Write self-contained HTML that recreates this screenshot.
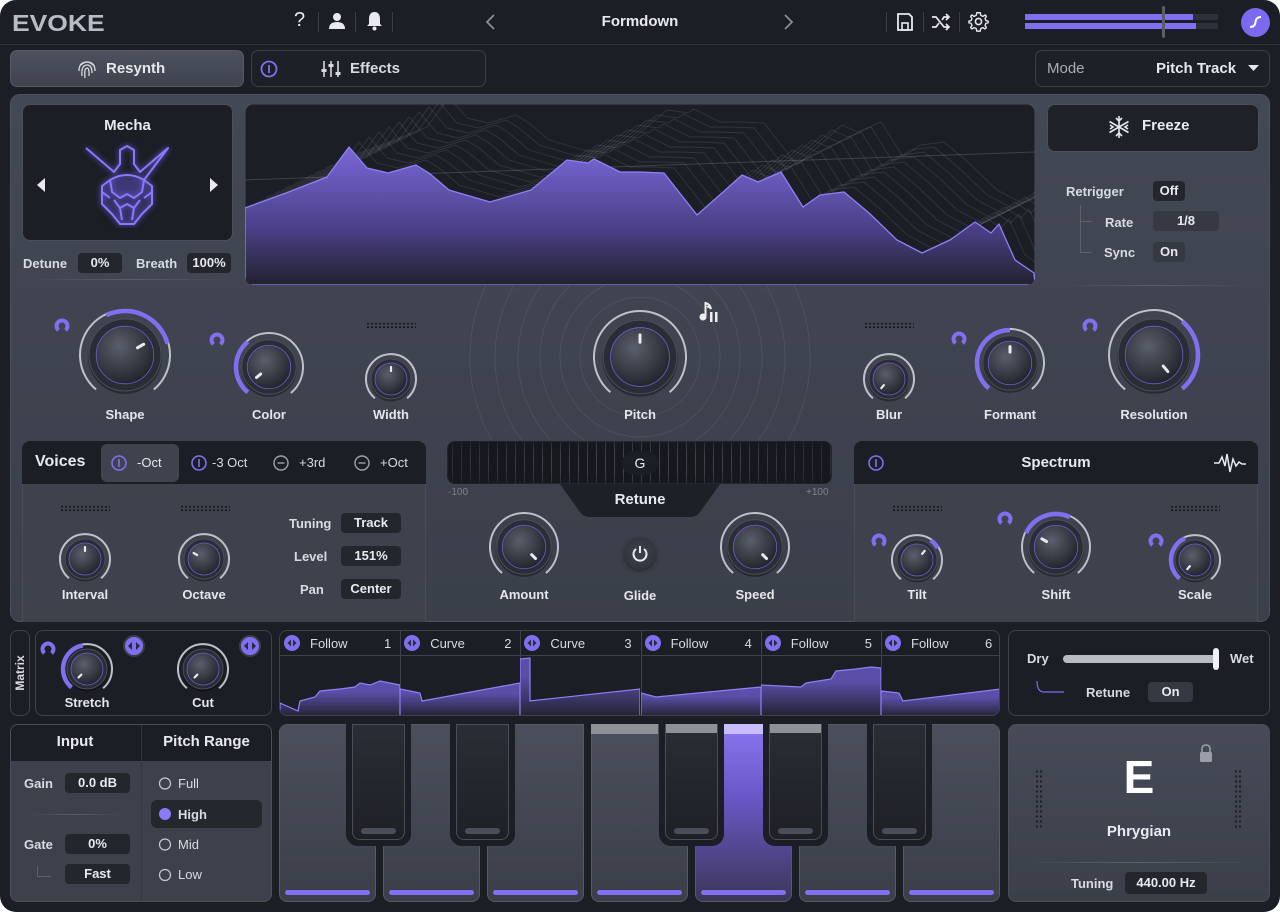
<!DOCTYPE html>
<html><head><meta charset="utf-8">
<style>
*{box-sizing:border-box;margin:0;padding:0}
body{width:1280px;height:912px;background:#fff;font-family:"Liberation Sans",sans-serif;color:#e8eaf0;overflow:hidden;position:relative}
.app{position:absolute;left:0;top:0;width:1280px;height:912px;background:#1c1e25;border-radius:16px;overflow:hidden}
.a{position:absolute}
.lbl{position:absolute;font-size:13px;font-weight:bold;color:#e4e6ec;text-align:center;transform:translateX(-50%);white-space:nowrap}
.val{position:absolute;background:#23262d;border-radius:4px;font-size:13px;font-weight:bold;color:#e8eaf0;text-align:center;line-height:20px;height:20px}
.t{position:absolute;font-size:13px;color:#d8dbe2;font-weight:bold;white-space:nowrap}
.dots{position:absolute;height:7px;background-image:radial-gradient(circle,#16181d 0.9px,transparent 1.1px);background-size:4px 3.5px}
</style></head><body>
<div class="app" id="app">
<!-- top bar -->
<div class="a" style="left:12px;top:10px;font-size:23px;font-weight:bold;color:#b9bcc5;transform:scaleX(1.15);transform-origin:left">EVOKE</div>
<div class="a" style="left:294px;top:9px;font-size:20px;color:#e8eaf0">?</div>
<div class="a" style="left:318px;top:12px;width:1px;height:20px;background:#3a3d46"></div>
<svg class="a" style="left:328px;top:12px" width="18" height="18" viewBox="0 0 18 18"><circle cx="9" cy="5" r="4" fill="#e8eaf0"/><path d="M1 17 Q1 10 9 10 Q17 10 17 17Z" fill="#e8eaf0"/></svg>
<div class="a" style="left:355px;top:12px;width:1px;height:20px;background:#3a3d46"></div>
<svg class="a" style="left:366px;top:11px" width="17" height="20" viewBox="0 0 17 20"><path d="M8.5 1 C4 1 3 5 3 8 L3 13 L1 15 L16 15 L14 13 L14 8 C14 5 13 1 8.5 1Z" fill="#e8eaf0"/><circle cx="8.5" cy="17.5" r="2" fill="#e8eaf0"/></svg>
<div class="a" style="left:392px;top:12px;width:1px;height:20px;background:#3a3d46"></div>
<svg class="a" style="left:484px;top:14px" width="12" height="16"><path d="M10 1 L3 8 L10 15" stroke="#8a8e98" stroke-width="1.8" fill="none"/></svg>
<div class="a" style="left:540px;top:13px;width:200px;text-align:center;font-size:15px;font-weight:bold">Formdown</div>
<svg class="a" style="left:783px;top:14px" width="12" height="16"><path d="M2 1 L9 8 L2 15" stroke="#8a8e98" stroke-width="1.8" fill="none"/></svg>
<div class="a" style="left:886px;top:12px;width:1px;height:20px;background:#3a3d46"></div>
<svg class="a" style="left:896px;top:12px" width="18" height="20" viewBox="0 0 18 20"><path d="M2 2 H13 L16 5 V18 H2Z" stroke="#e8eaf0" stroke-width="1.8" fill="none"/><rect x="6" y="11" width="6" height="7" stroke="#e8eaf0" stroke-width="1.6" fill="none"/></svg>
<div class="a" style="left:923px;top:12px;width:1px;height:20px;background:#3a3d46"></div>
<svg class="a" style="left:931px;top:12px" width="20" height="20" viewBox="0 0 20 20"><path d="M1 5 H5 L13 15 H18 M1 15 H5 L8 11 M11 8 L13 5 H18 M15 2 L18 5 L15 8 M15 12 L18 15 L15 18" stroke="#e8eaf0" stroke-width="1.7" fill="none"/></svg>
<div class="a" style="left:959px;top:12px;width:1px;height:20px;background:#3a3d46"></div>
<svg class="a" style="left:968px;top:11px" width="21" height="21" viewBox="0 0 24 24"><circle cx="12" cy="12" r="3.5" stroke="#e8eaf0" stroke-width="1.8" fill="none"/><path d="M12 2 L14 2 L14.6 5 L17 6.2 L19.6 4.5 L21 6 L19.5 8.6 L20.5 11 L23 11.5 V13.5 L20.5 14 L19.5 16.4 L21 19 L19.5 20.5 L17 19 L14.6 20 L14 23 H10 L9.4 20 L7 19 L4.5 20.5 L3 19 L4.5 16.4 L3.5 14 L1 13.5 V11.5 L3.5 11 L4.5 8.6 L3 6 L4.5 4.5 L7 6.2 L9.4 5 L10 2Z" stroke="#e8eaf0" stroke-width="1.6" fill="none" stroke-linejoin="round"/></svg>
<div class="a" style="left:1025px;top:14px;width:193px;height:6px;background:#2e313a"></div>
<div class="a" style="left:1025px;top:14px;width:168px;height:6px;background:#8070f0"></div>
<div class="a" style="left:1025px;top:23px;width:193px;height:6px;background:#2e313a"></div>
<div class="a" style="left:1025px;top:23px;width:171px;height:6px;background:#8070f0"></div>
<div class="a" style="left:1162px;top:6px;width:3px;height:32px;background:#5a5e68;border-radius:2px"></div>
<div class="a" style="left:1241px;top:8px;width:29px;height:29px;border-radius:50%;background:#7b69f0"></div>
<svg class="a" style="left:1247px;top:14px" width="17" height="17"><path d="M3 13 Q8 13 8.5 8 Q9 3 14 3" stroke="#fff" stroke-width="2" fill="none"/></svg>
<div class="a" style="left:0;top:44px;width:1280px;height:1px;background:#2e3139"></div>

<!-- tabs -->
<div class="a" style="left:10px;top:50px;width:234px;height:37px;border-radius:7px;background:linear-gradient(#4c515d,#3f4350);border:1px solid #555a66"></div>
<svg class="a" style="left:77px;top:58px" width="20" height="22" viewBox="0 0 20 22"><g stroke="#d8dae0" stroke-width="1.3" fill="none"><path d="M3 8 Q10 0 17 8"/><path d="M2 13 Q2 4 10 4 Q18 4 18 13"/><path d="M5 18 Q4 7 10 7 Q15 7 15 15"/><path d="M8 20 Q7 10 10 10 Q12.5 10 12 18"/></g></svg>
<div class="a" style="left:106px;top:60px;font-size:15px;font-weight:bold;color:#e6e8ee">Resynth</div>
<div class="a" style="left:251px;top:50px;width:235px;height:37px;border-radius:7px;background:#1e2027;border:1px solid #3a3e48"></div>
<svg class="a" style="left:260px;top:60px" width="18" height="18"><circle cx="9" cy="9" r="7.5" stroke="#8070f0" stroke-width="1.8" fill="none"/><line x1="9" y1="5" x2="9" y2="13" stroke="#8070f0" stroke-width="1.8"/></svg>
<svg class="a" style="left:320px;top:59px" width="22" height="20"><g stroke="#d8dae0" stroke-width="1.6"><line x1="4" y1="2" x2="4" y2="18"/><line x1="11" y1="2" x2="11" y2="18"/><line x1="18" y1="2" x2="18" y2="18"/></g><g fill="#d8dae0"><rect x="1.5" y="10" width="5" height="3"/><rect x="8.5" y="5" width="5" height="3"/><rect x="15.5" y="13" width="5" height="3"/></g></svg>
<div class="a" style="left:350px;top:60px;font-size:15px;font-weight:bold;color:#d8dae0">Effects</div>
<div class="a" style="left:1035px;top:50px;width:235px;height:37px;border-radius:7px;background:#1e2027;border:1px solid #3a3e48"></div>
<div class="a" style="left:1047px;top:60px;font-size:15px;color:#a9adb7">Mode</div>
<div class="a" style="left:1156px;top:60px;font-size:15px;font-weight:bold;color:#e6e8ee">Pitch Track</div>
<svg class="a" style="left:1248px;top:65px" width="11" height="7"><path d="M0 0 H11 L5.5 6Z" fill="#e6e8ee"/></svg>

<!-- main panel -->
<div class="a" style="left:10px;top:94px;width:1260px;height:528px;border-radius:10px;background:linear-gradient(#434855,#3a3f4a);border:1px solid #4c515d"></div>
<svg class="a" style="left:10px;top:285px" width="1260" height="155"><g stroke="rgba(255,255,255,0.07)" fill="none" stroke-width="1">
<circle cx="630" cy="72" r="60"/><circle cx="630" cy="72" r="80"/><circle cx="630" cy="72" r="100"/><circle cx="630" cy="72" r="122"/><circle cx="630" cy="72" r="145"/><circle cx="630" cy="72" r="170"/></g></svg>

<div class="a" style="left:22px;top:104px;width:211px;height:137px;border-radius:8px;background:#1c1e25;border:1px solid #4a4f5a"></div>
<div class="a" style="left:22px;top:117px;width:211px;text-align:center;font-size:15px;font-weight:bold">Mecha</div>
<svg class="a" style="left:36px;top:178px" width="10" height="14"><path d="M9 0 V14 L1 7Z" fill="#e8eaf0"/></svg>
<svg class="a" style="left:209px;top:178px" width="10" height="14"><path d="M1 0 V14 L9 7Z" fill="#e8eaf0"/></svg>
<svg class="a" style="left:82px;top:142px" width="90" height="86" viewBox="0 0 90 86"><g stroke="#8a78ff" stroke-width="2" fill="rgba(112,96,240,0.12)" stroke-linejoin="round" style="filter:drop-shadow(0 0 3px #7060f0)">
<path d="M4 6 L32 30 L38 22 L38 8 L45 4 L52 8 L52 22 L58 30 L86 6 L62 38" fill="none"/>
<path d="M28 38 L20 44 L20 62 L30 72 L38 82 L52 82 L60 72 L70 62 L70 44 L62 38"/>
<path d="M28 38 Q45 28 62 38 L60 50 L52 56 L45 52 L38 56 L30 50Z"/>
<path d="M32 58 L38 66 L45 62 L52 66 L58 58 M38 66 L40 78 M52 66 L50 78 M20 50 L28 56 M70 50 L62 56" fill="none"/></g></svg>
<div class="t" style="left:23px;top:256px">Detune</div>
<div class="val" style="left:78px;top:253px;width:44px">0%</div>
<div class="t" style="left:136px;top:256px">Breath</div>
<div class="val" style="left:187px;top:253px;width:44px">100%</div>
<div class="a" style="left:30px;top:279px;width:200px;height:1px;background:linear-gradient(90deg,transparent,#5a5f6b,transparent)"></div>

<!-- waveform -->
<svg class="a" style="left:245px;top:104px" width="790" height="181" viewBox="245 104 790 181">
<defs><linearGradient id="wg" x1="0" y1="0" x2="0" y2="1"><stop offset="0" stop-color="#7a68d8"/><stop offset="0.6" stop-color="#4a3f86"/><stop offset="1" stop-color="#22222f"/></linearGradient>
<clipPath id="wc"><rect x="245" y="104" width="790" height="181" rx="8"/></clipPath></defs>
<rect x="245" y="104" width="790" height="181" rx="8" fill="#1c1e25" stroke="#4a4f5a"/>
<g clip-path="url(#wc)">
<g id="wire" fill="none" stroke="rgba(200,205,215,0.13)" stroke-width="0.9"></g>
<line x1="245" y1="180" x2="1035" y2="152" stroke="rgba(200,205,215,0.2)"/>
<path id="wp" d="M245 208 L286 193 L327 177 L349 147 L367 168 L388 173 L416 165 L429 173 L449 190 L490 202 L531 190 L567 160 L588 163 L594 159 L620 172 L640 172 L664 173 L697 215 L722 193 L742 175 L758 182 L781 172 L803 207 L820 195 L844 192 L869 213 L897 240 L922 253 L950 240 L975 222 L991 233 L999 224 L1015 260 L1034 273 L1035 285 L245 285Z" fill="url(#wg)" stroke="#8f80f8" stroke-width="1.3" stroke-linejoin="round"/>
</g></svg>

<!-- freeze -->
<div class="a" style="left:1047px;top:104px;width:212px;height:48px;border-radius:8px;background:#1f2128;border:1px solid #4a4f5a"></div>
<svg class="a" style="left:1107px;top:115px" width="24" height="24" viewBox="0 0 24 24"><g stroke="#e8eaf0" stroke-width="1.6" fill="none"><line x1="12" y1="1" x2="12" y2="23"/><line x1="2.5" y1="6.5" x2="21.5" y2="17.5"/><line x1="2.5" y1="17.5" x2="21.5" y2="6.5"/><path d="M9 3 L12 6 L15 3 M9 21 L12 18 L15 21 M3 10 L6 12 L3 14 M21 10 L18 12 L21 14"/></g></svg>
<div class="a" style="left:1142px;top:117px;font-size:15px;font-weight:bold">Freeze</div>
<div class="t" style="left:1066px;top:184px">Retrigger</div>
<div class="val" style="left:1153px;top:181px;width:32px">Off</div>
<div class="a" style="left:1080px;top:205px;width:1px;height:48px;background:#5c616c"></div>
<div class="a" style="left:1080px;top:221px;width:12px;height:1px;background:#5c616c"></div>
<div class="a" style="left:1080px;top:252px;width:12px;height:1px;background:#5c616c"></div>
<div class="t" style="left:1105px;top:215px">Rate</div>
<div class="val" style="left:1153px;top:211px;width:66px;background:#353943">1/8</div>
<div class="t" style="left:1104px;top:245px">Sync</div>
<div class="val" style="left:1153px;top:242px;width:32px;background:#353943">On</div>
<div class="a" style="left:1060px;top:285px;width:190px;height:1px;background:linear-gradient(90deg,transparent,#5a5f6b,transparent)"></div>

<div class="dots" style="left:366px;top:322px;width:50px"></div>
<div class="dots" style="left:864px;top:322px;width:50px"></div>
<svg class="a" style="left:698px;top:300px" width="24" height="24" viewBox="0 0 24 24"><circle cx="5" cy="17" r="3.5" fill="#eee"/><path d="M7.5 17 V3 Q12 4 13 9 Q11 6 9 7" stroke="#eee" stroke-width="2" fill="none"/><rect x="12" y="12" width="2.5" height="10" fill="#eee"/><rect x="17" y="12" width="2.5" height="10" fill="#eee"/></svg>

<div class="lbl" style="left:125px;top:407px">Shape</div>
<div class="lbl" style="left:269px;top:407px">Color</div>
<div class="lbl" style="left:391px;top:407px">Width</div>
<div class="lbl" style="left:640px;top:407px">Pitch</div>
<div class="lbl" style="left:889px;top:407px">Blur</div>
<div class="lbl" style="left:1010px;top:407px">Formant</div>
<div class="lbl" style="left:1154px;top:407px">Resolution</div>

<!-- voices -->
<div class="a" style="left:22px;top:441px;width:404px;height:181px;border-radius:8px 8px 0 0;background:#3d424d;border:1px solid #474c57;border-bottom:none"></div>
<div class="a" style="left:22px;top:441px;width:404px;height:43px;border-radius:8px 8px 0 0;background:#1c1e25"></div>
<div class="a" style="left:35px;top:453px;font-size:16px;font-weight:bold">Voices</div>
<div class="a" style="left:101px;top:444px;width:78px;height:38px;border-radius:6px;background:#3e434e"></div>
<svg class="a" style="left:110px;top:454px" width="18" height="18"><circle cx="9" cy="9" r="7" stroke="#8070f0" stroke-width="1.6" fill="none"/><line x1="9" y1="5" x2="9" y2="13" stroke="#8070f0" stroke-width="1.6"/></svg>
<div class="t" style="left:137px;top:455px;font-weight:normal;color:#e6e8ee">-Oct</div>
<svg class="a" style="left:190px;top:454px" width="18" height="18"><circle cx="9" cy="9" r="7" stroke="#8070f0" stroke-width="1.6" fill="none"/><line x1="9" y1="5" x2="9" y2="13" stroke="#8070f0" stroke-width="1.6"/></svg>
<div class="t" style="left:212px;top:455px;font-weight:normal">-3 Oct</div>
<svg class="a" style="left:272px;top:454px" width="18" height="18"><circle cx="9" cy="9" r="7" stroke="#9ea2ac" stroke-width="1.4" fill="none"/><line x1="5.5" y1="9" x2="12.5" y2="9" stroke="#9ea2ac" stroke-width="1.4"/></svg>
<div class="t" style="left:299px;top:455px;font-weight:normal">+3rd</div>
<svg class="a" style="left:353px;top:454px" width="18" height="18"><circle cx="9" cy="9" r="7" stroke="#9ea2ac" stroke-width="1.4" fill="none"/><line x1="5.5" y1="9" x2="12.5" y2="9" stroke="#9ea2ac" stroke-width="1.4"/></svg>
<div class="t" style="left:380px;top:455px;font-weight:normal">+Oct</div>
<div class="dots" style="left:60px;top:505px;width:50px"></div>
<div class="dots" style="left:180px;top:505px;width:50px"></div>
<div class="lbl" style="left:85px;top:587px">Interval</div>
<div class="lbl" style="left:204px;top:587px">Octave</div>
<div class="t" style="left:289px;top:516px">Tuning</div>
<div class="val" style="left:341px;top:513px;width:60px">Track</div>
<div class="t" style="left:294px;top:549px">Level</div>
<div class="val" style="left:341px;top:546px;width:60px">151%</div>
<div class="t" style="left:300px;top:582px">Pan</div>
<div class="val" style="left:341px;top:579px;width:60px">Center</div>

<!-- retune -->
<div class="a" style="left:447px;top:441px;width:385px;height:43px;border-radius:8px;background:#16181d;border:1px solid #3a3e48;background-image:repeating-linear-gradient(90deg,#16181d 0 4px,#4a4e58 4px 5px,#16181d 5px 9px)"></div>
<div class="a" style="left:447px;top:441px;width:385px;height:43px;border-radius:8px;background:radial-gradient(ellipse at center,rgba(22,24,29,0.2) 30%,rgba(22,24,29,0.85) 100%)"></div>
<div class="a" style="left:622px;top:451px;width:36px;height:24px;border-radius:12px;background:#1c1e25;text-align:center;line-height:24px;font-size:14px">G</div>
<svg class="a" style="left:560px;top:484px" width="160" height="34"><path d="M0 0 H160 L140 28 Q137 33 130 33 H30 Q23 33 20 28Z" fill="#1e2027"/></svg>
<div class="a" style="left:560px;top:491px;width:160px;text-align:center;font-size:15px;font-weight:bold">Retune</div>
<div class="a" style="left:448px;top:487px;font-size:10px;color:#7d818b">-100</div>
<div class="a" style="left:806px;top:487px;font-size:10px;color:#7d818b">+100</div>
<div class="a" style="left:624px;top:537px;width:32px;height:32px;border-radius:50%;background:radial-gradient(#3d414b,#2e3139);box-shadow:0 2px 4px rgba(0,0,0,0.4)"></div>
<svg class="a" style="left:631px;top:544px" width="18" height="18"><path d="M5 5 A6.5 6.5 0 1 0 13 5" stroke="#e8eaf0" stroke-width="2" fill="none"/><line x1="9" y1="2" x2="9" y2="9" stroke="#e8eaf0" stroke-width="2"/></svg>
<div class="lbl" style="left:524px;top:587px">Amount</div>
<div class="lbl" style="left:640px;top:588px">Glide</div>
<div class="lbl" style="left:755px;top:587px">Speed</div>

<!-- spectrum -->
<div class="a" style="left:854px;top:441px;width:404px;height:181px;border-radius:8px 8px 0 0;background:#3d424d;border:1px solid #474c57;border-bottom:none"></div>
<div class="a" style="left:854px;top:441px;width:404px;height:43px;border-radius:8px 8px 0 0;background:#1c1e25"></div>
<svg class="a" style="left:867px;top:454px" width="18" height="18"><circle cx="9" cy="9" r="7" stroke="#8070f0" stroke-width="1.6" fill="none"/><line x1="9" y1="5" x2="9" y2="13" stroke="#8070f0" stroke-width="1.6"/></svg>
<div class="a" style="left:854px;top:454px;width:404px;text-align:center;font-size:15px;font-weight:bold">Spectrum</div>
<svg class="a" style="left:1213px;top:452px" width="34" height="22"><path d="M1 11 H6 L9 5 L12 14 L14 2 L17 20 L20 7 L23 14 L26 10 L29 12 H33" stroke="#e8eaf0" stroke-width="1.5" fill="none"/></svg>
<div class="dots" style="left:892px;top:505px;width:50px"></div>
<div class="dots" style="left:1170px;top:505px;width:50px"></div>
<div class="lbl" style="left:917px;top:587px">Tilt</div>
<div class="lbl" style="left:1056px;top:587px">Shift</div>
<div class="lbl" style="left:1195px;top:587px">Scale</div>

<!-- matrix row -->
<div class="a" style="left:10px;top:630px;width:20px;height:86px;border-radius:8px;border:1px solid #3e424c;background:#1c1e25"></div>
<div class="a" style="left:20px;top:673px;font-size:12px;font-weight:bold;color:#d8dae0;transform:translate(-50%,-50%) rotate(-90deg)">Matrix</div>
<div class="a" style="left:35px;top:630px;width:237px;height:86px;border-radius:8px;border:1px solid #3e424c;background:#1c1e25"></div>
<div class="lbl" style="left:87px;top:695px">Stretch</div>
<div class="lbl" style="left:203px;top:695px">Cut</div>
<div class="a" style="left:279px;top:630px;width:721px;height:86px;border-radius:8px;border:1px solid #3e424c;background:#1c1e25;overflow:hidden" id="mod"></div>
<div class="a" style="left:1008px;top:630px;width:262px;height:86px;border-radius:8px;border:1px solid #3e424c;background:#1c1e25"></div>
<div class="t" style="left:1027px;top:651px">Dry</div>
<div class="a" style="left:1063px;top:655px;width:155px;height:8px;border-radius:4px;background:#b8bbc3"></div>
<div class="a" style="left:1213px;top:648px;width:6px;height:22px;border-radius:3px;background:#f0f1f4"></div>
<div class="t" style="left:1230px;top:651px">Wet</div>
<svg class="a" style="left:1036px;top:680px" width="30" height="16"><path d="M1 1 Q1 12 8 12 H28" stroke="#7b69f0" stroke-width="1.2" fill="none"/></svg>
<div class="t" style="left:1086px;top:685px">Retune</div>
<div class="val" style="left:1148px;top:682px;width:45px;background:#353943">On</div>

<!-- input / pitch range -->
<div class="a" style="left:10px;top:724px;width:262px;height:178px;border-radius:8px;border:1px solid #4a4f5a;background:#3c414c;overflow:hidden">
 <div class="a" style="left:0;top:0;width:262px;height:36px;background:#1c1e25"></div>
 <div class="a" style="left:130px;top:0;width:1px;height:178px;background:#333741"></div>
</div>
<div class="a" style="left:10px;top:733px;width:130px;text-align:center;font-size:15px;font-weight:bold">Input</div>
<div class="a" style="left:141px;top:733px;width:131px;text-align:center;font-size:15px;font-weight:bold">Pitch Range</div>
<div class="t" style="left:24px;top:776px">Gain</div>
<div class="val" style="left:65px;top:773px;width:65px">0.0 dB</div>
<div class="a" style="left:30px;top:814px;width:92px;height:1px;background:linear-gradient(90deg,transparent,#5a5f6b,transparent)"></div>
<div class="t" style="left:24px;top:837px">Gate</div>
<div class="val" style="left:65px;top:834px;width:65px">0%</div>
<div class="a" style="left:37px;top:866px;width:1px;height:10px;background:#5c616c"></div>
<div class="a" style="left:37px;top:876px;width:14px;height:1px;background:#5c616c"></div>
<div class="val" style="left:65px;top:864px;width:65px">Fast</div>
<div class="a" style="left:151px;top:800px;width:111px;height:28px;border-radius:6px;background:#24272e"></div>
<svg class="a" style="left:158px;top:776px" width="16" height="110"><g stroke="#c8cbd3" stroke-width="1.2" fill="none"><circle cx="7" cy="7.5" r="5.5"/><circle cx="7" cy="68.5" r="5.5"/><circle cx="7" cy="99" r="5.5"/></g><circle cx="7" cy="38" r="6" fill="#8a7af5"/></svg>
<div class="t" style="left:178px;top:776px;font-weight:normal">Full</div>
<div class="t" style="left:178px;top:807px">High</div>
<div class="t" style="left:178px;top:837px;font-weight:normal">Mid</div>
<div class="t" style="left:178px;top:867px;font-weight:normal">Low</div>

<!-- keyboard -->
<div class="a" style="left:279px;top:724px;width:721px;height:178px;border-radius:8px;background:#1c1e25;overflow:hidden" id="kb"></div>

<!-- key box -->
<div class="a" style="left:1008px;top:724px;width:262px;height:178px;border-radius:8px;border:1px solid #4a4f5a;background:linear-gradient(#464b57,#3a3f4a)"></div>
<div class="a" style="left:1008px;top:750px;width:262px;text-align:center;font-size:46px;font-weight:bold;color:#fff">E</div>
<div class="a" style="left:1008px;top:823px;width:262px;text-align:center;font-size:15px;font-weight:bold">Phrygian</div>
<svg class="a" style="left:1199px;top:744px" width="14" height="19"><path d="M3 8 V5 Q3 1 7 1 Q11 1 11 5 V8" stroke="#9a9ea8" stroke-width="1.6" fill="none"/><rect x="1" y="8" width="12" height="10" rx="1.5" fill="#9a9ea8"/></svg>
<div class="a" style="left:1035px;top:769px;width:8px;height:60px;background-image:radial-gradient(circle,#1e2027 1.1px,transparent 1.3px);background-size:4px 5px"></div>
<div class="a" style="left:1234px;top:769px;width:8px;height:60px;background-image:radial-gradient(circle,#1e2027 1.1px,transparent 1.3px);background-size:4px 5px"></div>
<div class="a" style="left:1025px;top:862px;width:228px;height:1px;background:linear-gradient(90deg,transparent,#5f6470,transparent)"></div>
<div class="t" style="left:1071px;top:876px">Tuning</div>
<div class="val" style="left:1125px;top:872px;width:82px;height:22px;line-height:22px">440.00 Hz</div>
</div>

<script>
var app=document.getElementById('app');
function P(cx,cy,r,a){a=(a-90)*Math.PI/180;return [cx+r*Math.cos(a),cy+r*Math.sin(a)];}
function arc(cx,cy,r,a1,a2){var p1=P(cx,cy,r,a1),p2=P(cx,cy,r,a2);return 'M'+p1[0].toFixed(1)+' '+p1[1].toFixed(1)+' A'+r+' '+r+' 0 '+((a2-a1)>180?1:0)+' 1 '+p2[0].toFixed(1)+' '+p2[1].toFixed(1);}
var kid=0;
function knob(cx,cy,R,pa,ind){
 var s=R*2+12,o=s/2;kid++;
 var h='<svg class="a" style="left:'+(cx-o)+'px;top:'+(cy-o)+'px" width="'+s+'" height="'+s+'">';
 h+='<defs><radialGradient id="kg'+kid+'" cx="0.4" cy="0.35" r="0.7"><stop offset="0" stop-color="#5a5f6c"/><stop offset="1" stop-color="#1f2228"/></radialGradient></defs>';
 h+='<path d="'+arc(o,o,R,-140,140)+'" stroke="#bfc2ca" stroke-width="2" fill="none"/>';
 if(pa)h+='<path d="'+arc(o,o,R-1,pa[0],pa[1])+'" stroke="#8070f0" stroke-width="4.5" fill="none"/>';
 h+='<circle cx="'+o+'" cy="'+(o+2)+'" r="'+(R*0.82)+'" fill="rgba(0,0,0,0.35)"/>';
 h+='<circle cx="'+o+'" cy="'+o+'" r="'+(R*0.8)+'" fill="#2a2d35" stroke="#4a4e58" stroke-width="1"/>';
 h+='<circle cx="'+o+'" cy="'+o+'" r="'+(R*0.64)+'" fill="url(#kg'+kid+')" stroke="#6a5ed0" stroke-width="0.8"/>';
 var a=P(o,o,R*0.48,ind),b=P(o,o,R*0.32,ind);
 h+='<line x1="'+a[0]+'" y1="'+a[1]+'" x2="'+b[0]+'" y2="'+b[1]+'" stroke="#e8eaf0" stroke-width="'+(R>30?3:2.2)+'" stroke-linecap="round"/>';
 h+='</svg>';app.insertAdjacentHTML('beforeend',h);
}
function mod(x,y){app.insertAdjacentHTML('beforeend','<svg class="a" style="left:'+(x-8)+'px;top:'+(y-8)+'px" width="16" height="16"><path d="'+arc(8,8,5.5,-140,140)+'" stroke="#8070f0" stroke-width="4" fill="none"/></svg>');}
knob(125,355,45,[-25,75],60);
knob(269,367,34,[-140,-40],-130);
knob(391,379,25,null,0);
knob(640,357,46,null,0);
knob(889,379,25,null,-140);
knob(1010,363,34,[-140,0],0);
knob(1154,355,45,[40,140],140);
knob(85,559,25,null,0);
knob(204,559,25,null,-60);
knob(524,547,34,null,135);
knob(755,547,34,null,135);
knob(917,560,25,[35,60],40);
knob(1056,547,34,[-65,25],-60);
knob(1195,560,25,[-140,-25],-140);
knob(87,669,25,[-140,-10],-135);
knob(203,669,25,null,-135);
[[62,326],[217,340],[959,339],[1090,326],[879,541],[1005,519],[1156,541],[48,649]].forEach(function(m){mod(m[0],m[1]);});
[[134,646],[250,646]].forEach(function(m){app.insertAdjacentHTML('beforeend','<svg class="a" style="left:'+(m[0]-12)+'px;top:'+(m[1]-12)+'px" width="24" height="24"><circle cx="12" cy="12" r="11" fill="#3a3e48"/><circle cx="12" cy="12" r="9" fill="#8070f0"/><path d="M10 8 L6 12 L10 16Z M14 8 L18 12 L14 16Z" fill="#2a2d35"/></svg>');});
var wp=document.getElementById('wp').getAttribute('d').replace(/ L1035 285 L245 285Z/,'');
var w='';for(var i=1;i<11;i++){w+='<path d="'+wp+'" transform="translate('+(i*10)+','+(-i*5)+')"/>';}
document.getElementById('wire').innerHTML=w;
var names=['Follow','Curve','Curve','Follow','Follow','Follow'];
var paths=[
'M0 72 L18 80 L20 70 L35 66 L40 60 L60 58 L75 56 L80 52 L90 54 L100 50 L110 52 L120 54 V86 H0Z',
'M0 58 L20 62 L22 70 L120 52 V86 H0Z',
'M0 28 L10 27 L10 70 L120 58 V86 H0Z',
'M0 62 L15 66 L120 56 V86 H0Z',
'M0 54 L40 56 L45 52 L70 48 L75 40 L95 38 L110 36 L120 37 V86 H0Z',
'M0 60 L18 62 L22 70 L120 58 V86 H0Z'];
var m='';
for(var i=0;i<6;i++){var x=i*120.2;
 m+='<div class="a" style="left:'+x+'px;top:0;width:120px;height:86px;border-left:'+(i?1:0)+'px solid #3e424c"></div>';
 m+='<div class="a" style="left:'+x+'px;top:24px;width:120px;height:1px;background:#3e424c"></div>';
 m+='<svg class="a" style="left:'+(x+4)+'px;top:4px" width="16" height="16"><circle cx="8" cy="8" r="8" fill="#8070f0"/><path d="M7 4.5 L3.5 8 L7 11.5Z M9 4.5 L12.5 8 L9 11.5Z" fill="#2a2d35"/></svg>';
 m+='<div class="t" style="left:'+(x+30)+'px;top:5px;font-weight:normal">'+names[i]+'</div><div class="t" style="left:'+(x+104)+'px;top:5px;font-weight:normal">'+(i+1)+'</div>';
 m+='<svg class="a" style="left:'+x+'px;top:0" width="120" height="86"><defs><linearGradient id="mg'+i+'" x1="0" y1="0" x2="0" y2="1"><stop offset="0.3" stop-color="#5b4ea8"/><stop offset="1" stop-color="#22222f"/></linearGradient></defs><path d="'+paths[i]+'" fill="url(#mg'+i+')" stroke="#8f80f8" stroke-width="1.2"/></svg>';
}
document.getElementById('mod').innerHTML=m;
var k='';
var wx=[0,104,208,312,416,520,624];
for(var i=0;i<7;i++){var act=(i==4);
 k+='<div class="a" style="left:'+wx[i]+'px;top:0;width:97px;height:178px;border-radius:0 0 8px 8px;background:'+(act?'linear-gradient(#8a76f0,#6a58c8 40%,#3c3658)':'linear-gradient(#4a4f5b,#3a3f4a)')+';border:1px solid #555a66"></div>';
 k+='<div class="a" style="left:'+(wx[i]+6)+'px;top:166px;width:85px;height:5px;border-radius:3px;background:#8070f0"></div>';}
k+='<div class="a" style="left:312px;top:0;width:67px;height:10px;background:#8e9198"></div>';
k+='<div class="a" style="left:440px;top:0;width:51px;height:10px;background:#c8bcff"></div>';
var bx=[73,177,386,490,594];
for(var i=0;i<5;i++){
 k+='<div class="a" style="left:'+(bx[i]-6)+'px;top:-6px;width:65px;height:128px;border-radius:0 0 12px 12px;background:#1c1e25"></div>';
 k+='<div class="a" style="left:'+bx[i]+'px;top:0;width:53px;height:116px;border-radius:0 0 8px 8px;background:linear-gradient(#2a2d35,#1e2026);border:1px solid #4a4e58"></div>';
 if(i==2||i==3)k+='<div class="a" style="left:'+(bx[i]+1)+'px;top:0;width:51px;height:9px;background:#8e9198"></div>';
 k+='<div class="a" style="left:'+(bx[i]+9)+'px;top:104px;width:35px;height:6px;border-radius:3px;background:#4a4e58"></div>';}
document.getElementById('kb').innerHTML=k;
</script>
</body></html>
